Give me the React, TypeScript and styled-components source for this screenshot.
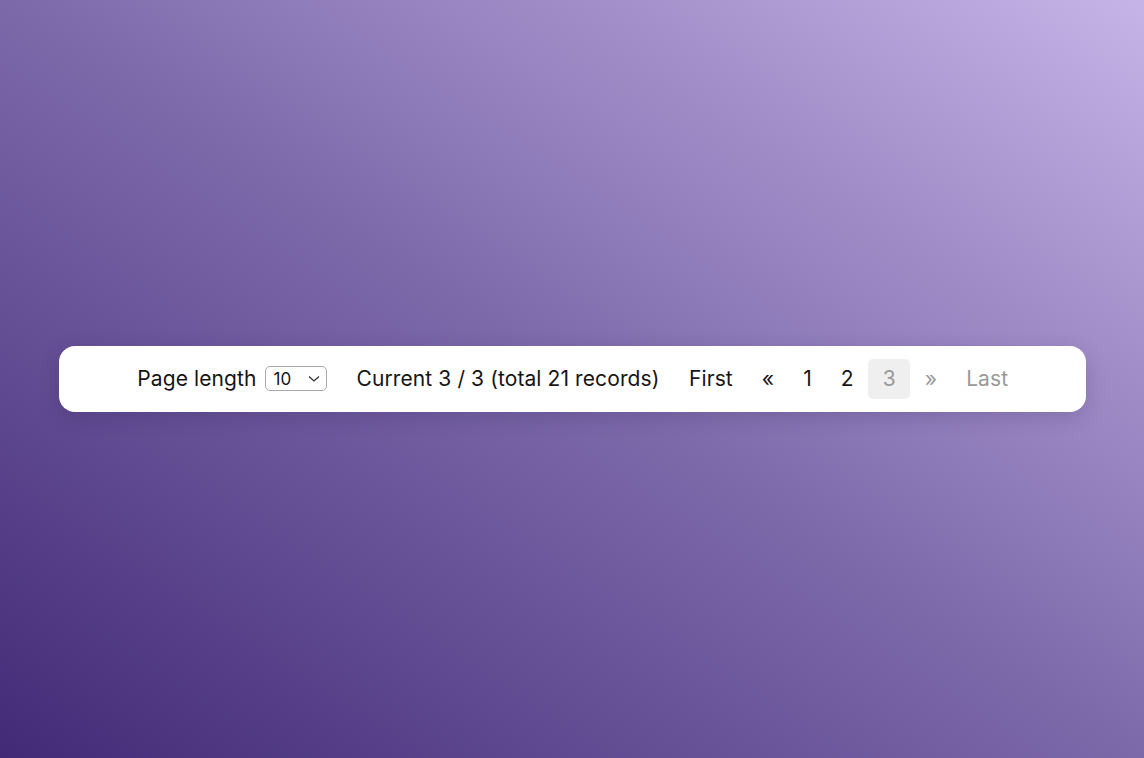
import React from "react";
import styled, { createGlobalStyle } from "styled-components";

const Global = createGlobalStyle`
  html, body { margin: 0; padding: 0; height: 100%; }
  body { font-family: Inter, "Noto Sans", sans-serif; }
  #root { height: 100%; }
`;

const Page = styled.div`
  width: 1144px;
  height: 758px;
  background: linear-gradient(to top right, #432a77 0%, #7c69aa 50%, #c6b3e7 100%);
  display: flex;
  align-items: center;
  padding: 0 58px 0 59px;
  box-sizing: border-box;
`;

const Card = styled.div`
  flex: 1;
  height: 66px;
  margin-bottom: 1px;
  padding-left: 15px;
  background: #fff;
  border-radius: 16px;
  box-shadow: 0 6px 20px rgba(40, 20, 80, 0.18);
  display: flex;
  align-items: center;
  justify-content: center;
  font-size: 21px;
  letter-spacing: 0.1px;
  color: #151515;
`;

const LengthGroup = styled.label`
  display: flex;
  align-items: center;
  gap: 8px;
  margin-right: 30px;
`;

const SelectBox = styled.div`
  position: relative;
  width: 62px;
  height: 25px;
  box-sizing: border-box;
  border: 1px solid #a9a9a9;
  border-radius: 5px;
  display: flex;
  align-items: center;
  padding-left: 8px;
  font-size: 17px;
  letter-spacing: 0;
  color: #151515;
  svg {
    position: absolute;
    right: 6px;
    top: 8px;
  }
`;

const Info = styled.span`
  margin-right: 15px;
`;

const PageButton = styled.span<{ $active?: boolean; $disabled?: boolean }>`
  display: inline-flex;
  align-items: center;
  justify-content: center;
  height: 40px;
  padding: 0 14.5px;
  border-radius: 5px;
  background: ${(p) => (p.$active ? "#efefef" : "transparent")};
  color: ${(p) => (p.$active || p.$disabled ? "#999" : "#151515")};
`;

export default function App() {
  return (
    <>
      <Global />
      <Page>
        <Card>
          <LengthGroup>
            Page length
            <SelectBox>
              10
              <svg width="12" height="8" viewBox="0 0 12 8">
                <path d="M1 1.5 L6 6 L11 1.5" fill="none" stroke="#333" strokeWidth="1.3" />
              </svg>
            </SelectBox>
          </LengthGroup>
          <Info>Current 3 / 3 (total 21 records)</Info>
          <PageButton>First</PageButton>
          <PageButton>«</PageButton>
          <PageButton>1</PageButton>
          <PageButton>2</PageButton>
          <PageButton $active>3</PageButton>
          <PageButton $disabled>»</PageButton>
          <PageButton $disabled>Last</PageButton>
        </Card>
      </Page>
    </>
  );
}
